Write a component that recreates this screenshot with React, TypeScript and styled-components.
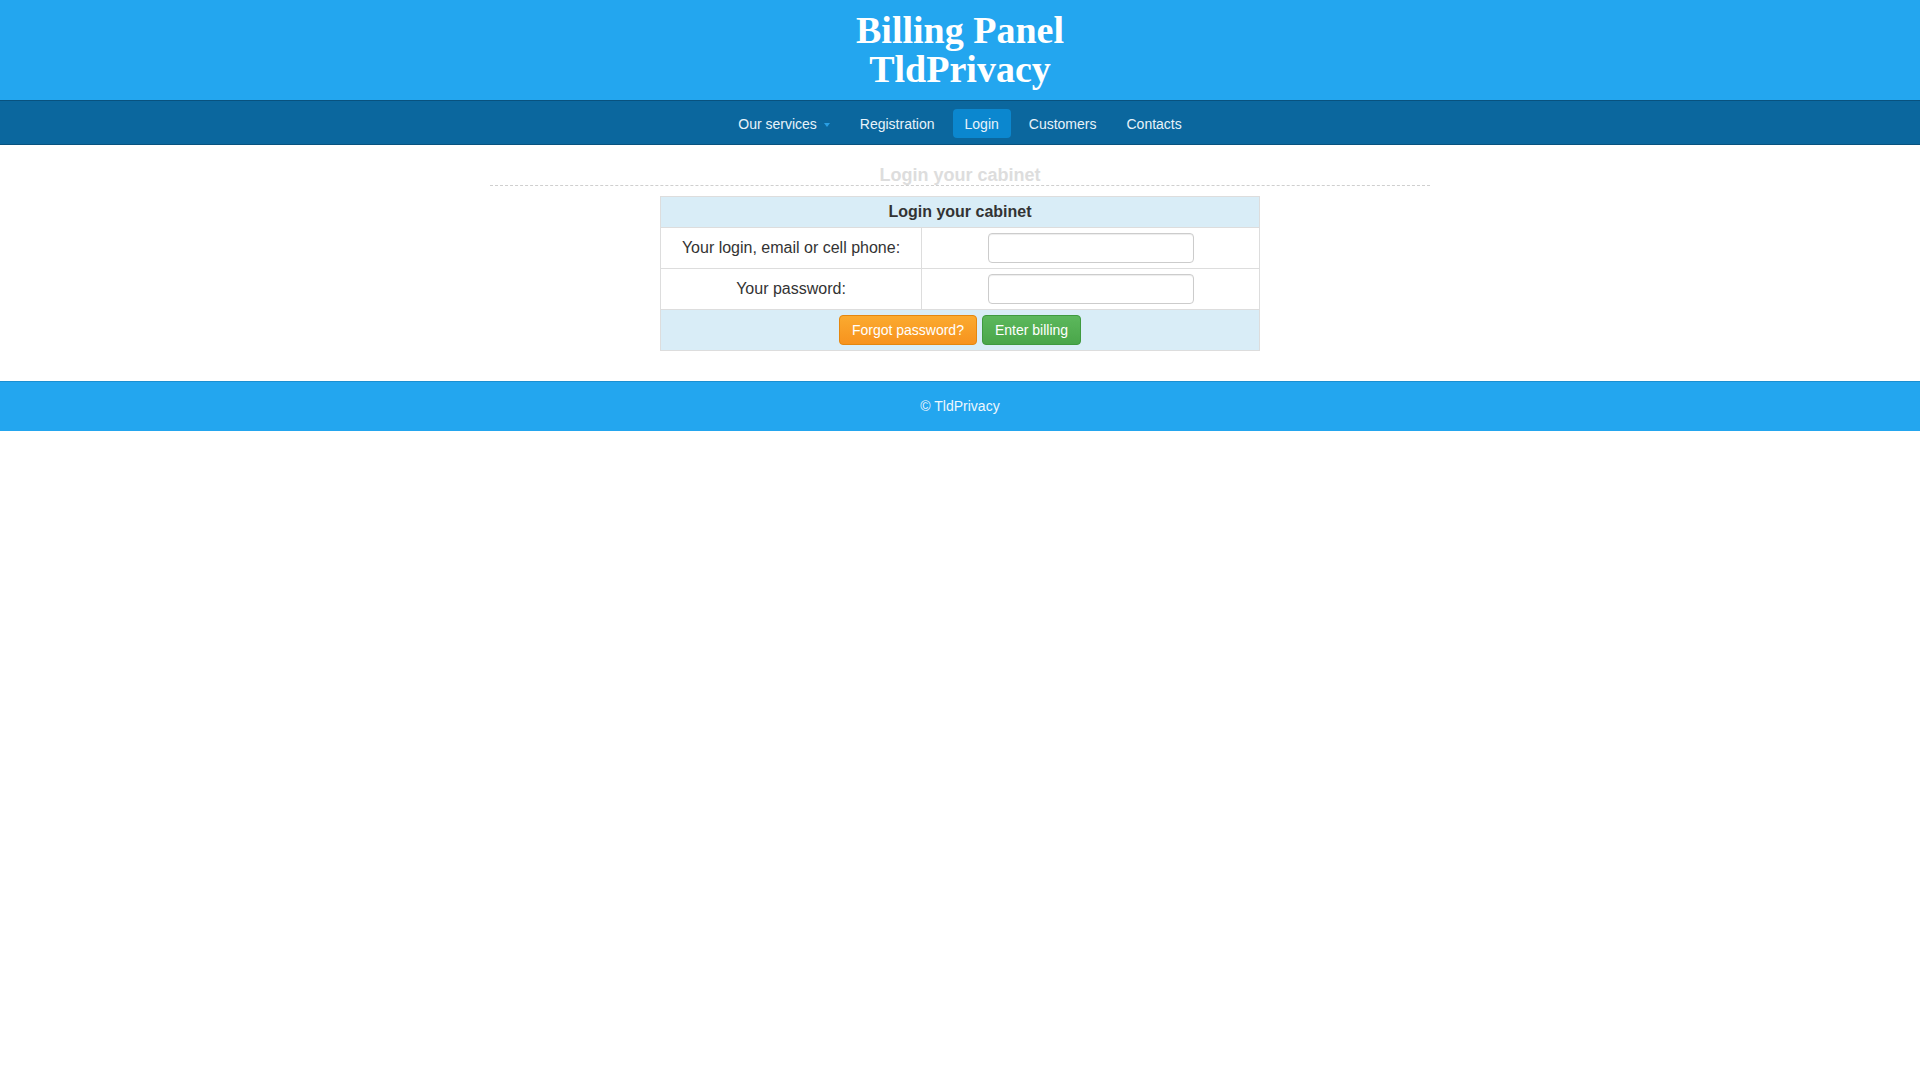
import React from 'react'
import styled, {createGlobalStyle} from 'styled-components'

const GlobalStyle = createGlobalStyle`
  body {
    margin: 0;
    background: #fff;
    font-family: "Liberation Sans", Arial, sans-serif;
    color: #333;
  }
`

const navItems = [
  {label: 'Our services', dropdown: true},
  {label: 'Registration'},
  {label: 'Login', active: true},
  {label: 'Customers'},
  {label: 'Contacts'},
]

const App = () => {
  return (
    <>
      <GlobalStyle />
      <Header>
        <Title>
          Billing Panel
          <br />
          TldPrivacy
        </Title>
      </Header>
      <Nav>
        <NavList>
          {navItems.map((item) => (
            <NavItem key={item.label} active={item.active}>
              {item.label}
              {item.dropdown && <Caret />}
            </NavItem>
          ))}
        </NavList>
      </Nav>
      <Main>
        <PageHeading>Login your cabinet</PageHeading>
        <LoginTable>
          <thead>
            <tr>
              <HeadCell colSpan={2}>Login your cabinet</HeadCell>
            </tr>
          </thead>
          <tbody>
            <tr>
              <LabelCell>Your login, email or cell phone:</LabelCell>
              <FieldCell>
                <Input type="text" />
              </FieldCell>
            </tr>
            <tr>
              <LabelCell>Your password:</LabelCell>
              <FieldCell>
                <Input type="password" />
              </FieldCell>
            </tr>
            <tr>
              <ActionCell colSpan={2}>
                <Actions>
                  <Button variant="warning">Forgot password?</Button>
                  <Button variant="success">Enter billing</Button>
                </Actions>
              </ActionCell>
            </tr>
          </tbody>
        </LoginTable>
      </Main>
      <Footer>© TldPrivacy</Footer>
    </>
  )
}

const Header = styled.header`
  background: #23a6ef;
  padding: 11px 0;
  text-align: center;
`
const Title = styled.h1`
  margin: 0;
  font-family: "Liberation Serif", "Times New Roman", serif;
  font-size: 38px;
  line-height: 39px;
  font-weight: bold;
  color: #fff;
`
const Nav = styled.nav`
  box-sizing: border-box;
  background: #0b679e;
  border-top: 1px solid #08527f;
  border-bottom: 1px solid #08527f;
  height: 45px;
  padding-top: 2px;
  display: flex;
  align-items: center;
  justify-content: center;
`
const NavList = styled.div`
  display: flex;
  align-items: center;
  gap: 6px;
`
const NavItem = styled.a<{active?: boolean}>`
  display: flex;
  align-items: center;
  height: 29px;
  padding: 0 12px;
  border-radius: 4px;
  font-size: 14px;
  color: #e8f3fa;
  background: ${(p) => (p.active ? '#0b87cf' : 'transparent')};
  cursor: pointer;
`
const Caret = styled.span`
  width: 0;
  height: 0;
  margin-left: 7px;
  margin-top: 2px;
  border-left: 3px solid transparent;
  border-right: 3px solid transparent;
  border-top: 4px solid #2a9fe4;
`
const Main = styled.main`
  width: 940px;
  margin: 0 auto;
  padding: 20px 0 30px;
`
const PageHeading = styled.h2`
  margin: 0 0 10px;
  font-size: 18px;
  line-height: 20px;
  font-weight: bold;
  color: #dddddd;
  text-align: center;
  border-bottom: 1px dashed #cfcfcf;
`
const LoginTable = styled.table`
  width: 600px;
  margin: 0 auto;
  border-collapse: collapse;
  border: 1px solid #dddddd;
  font-size: 16px;
`
const HeadCell = styled.th`
  background: #d9edf7;
  padding: 5px;
  line-height: 20px;
  font-weight: bold;
  color: #333;
  text-align: center;
  border: 1px solid #dddddd;
`
const LabelCell = styled.td`
  width: 250px;
  padding: 5px;
  text-align: center;
  line-height: 20px;
  border: 1px solid #dddddd;
`
const FieldCell = styled.td`
  padding: 5px;
  text-align: center;
  border: 1px solid #dddddd;
`
const Input = styled.input`
  display: block;
  box-sizing: border-box;
  width: 206px;
  height: 30px;
  margin: 0 auto;
  border: 1px solid #cccccc;
  border-radius: 4px;
  box-shadow: inset 0 1px 1px rgba(0, 0, 0, 0.075);
  font-family: inherit;
  font-size: 14px;
`
const ActionCell = styled.td`
  background: #d9edf7;
  padding: 5px;
  border: 1px solid #dddddd;
`
const Actions = styled.div`
  display: flex;
  justify-content: center;
  gap: 5px;
`
const buttonColors = {
  warning: {top: '#fbaa2f', bottom: '#f7931e', border: '#e5870f'},
  success: {top: '#5cb85c', bottom: '#4aa64a', border: '#3f9a3f'},
}
const Button = styled.button<{variant: 'warning' | 'success'}>`
  height: 30px;
  padding: 0 12px;
  font-family: inherit;
  font-size: 14px;
  line-height: 20px;
  color: #fff;
  border-radius: 4px;
  border: 1px solid ${(p) => buttonColors[p.variant].border};
  background: linear-gradient(
    ${(p) => buttonColors[p.variant].top},
    ${(p) => buttonColors[p.variant].bottom}
  );
  cursor: pointer;
`
const Footer = styled.footer`
  background: #23a6ef;
  border-top: 1px solid #1b8fd1;
  height: 49px;
  line-height: 49px;
  text-align: center;
  font-size: 14px;
  color: #eef7fd;
`

export default App
